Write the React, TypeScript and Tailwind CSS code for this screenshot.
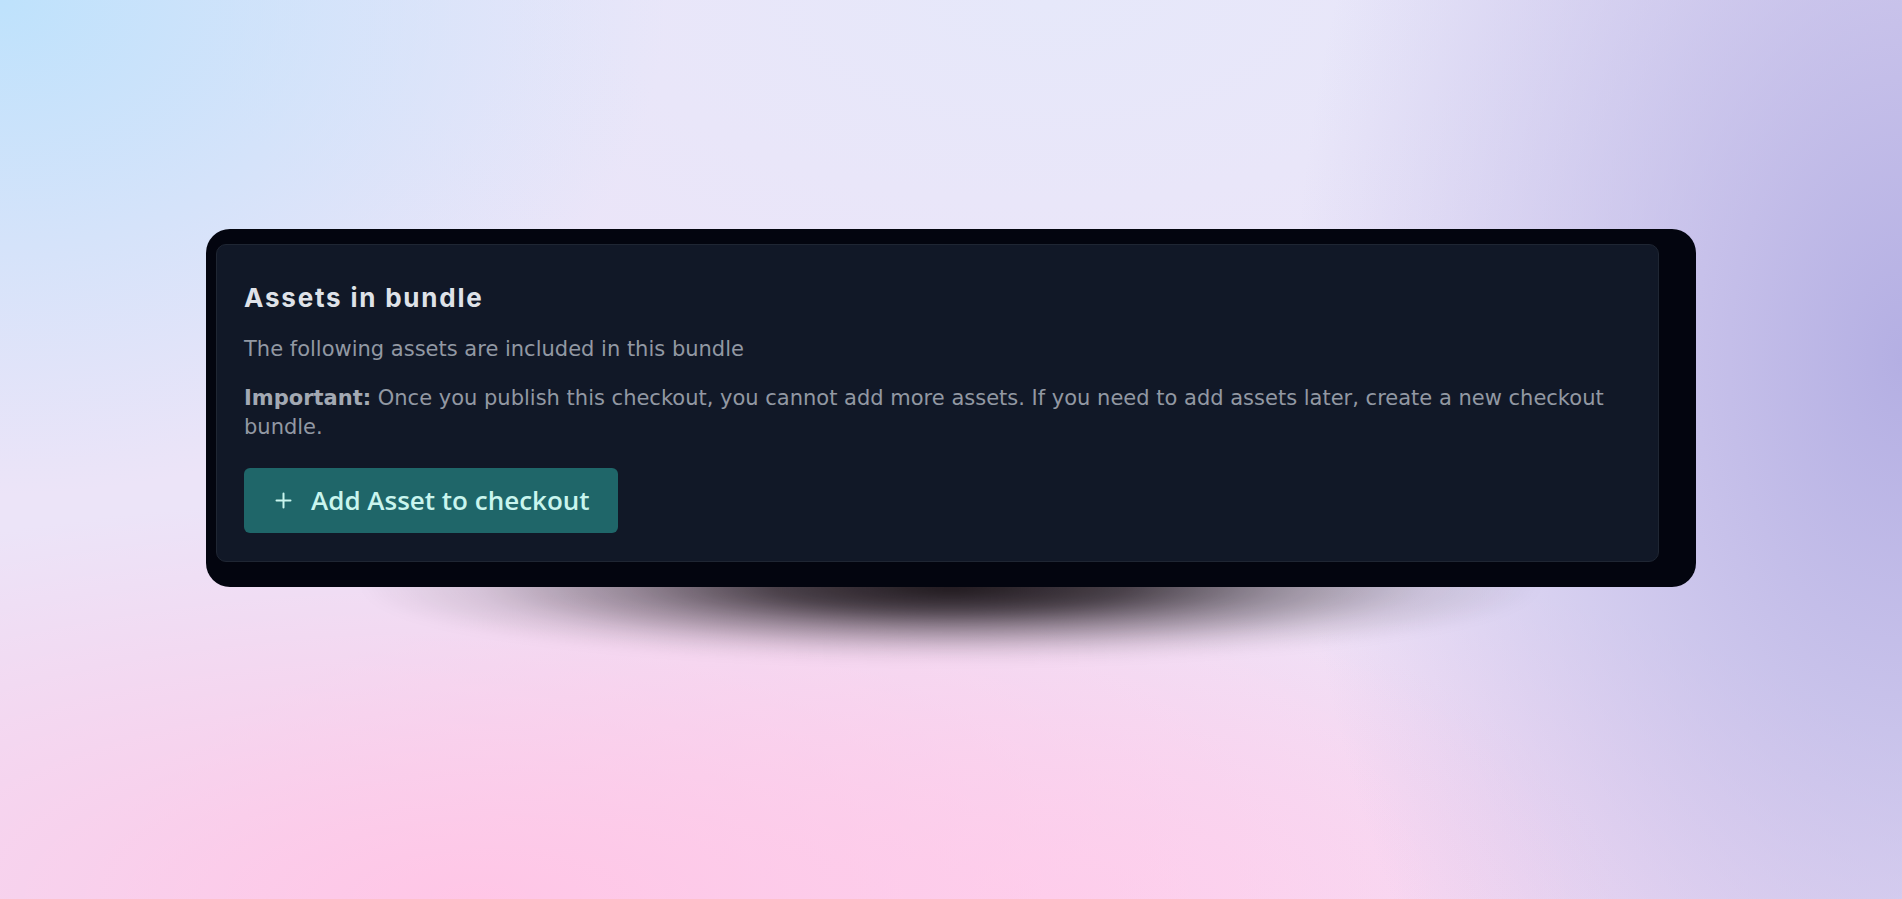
import React from "react";

export default function App() {
  return (
    <div className="relative min-h-screen w-full overflow-hidden bg-[#ece4f8] bg-[radial-gradient(ellipse_35%_55%_at_0%_0%,rgba(190,226,252,1)_0%,rgba(190,226,252,0)_100%),radial-gradient(ellipse_32%_110%_at_100%_40%,rgba(180,175,227,1)_0%,rgba(180,175,227,0.6)_40%,rgba(180,175,227,0)_100%),radial-gradient(ellipse_60%_45%_at_25%_100%,rgba(255,198,230,1)_0%,rgba(255,198,230,0)_100%),radial-gradient(ellipse_50%_40%_at_55%_100%,rgba(253,212,240,1)_0%,rgba(253,212,240,0)_100%),radial-gradient(ellipse_45%_45%_at_55%_0%,rgba(230,232,250,1)_0%,rgba(230,232,250,0)_100%)]">
      <div className="flex min-h-screen w-full items-center justify-center pb-[83px]">
        <div className="relative w-[1490px]">
          <div className="pointer-events-none absolute -bottom-[75px] left-1/2 h-[150px] w-[1180px] -translate-x-1/2 bg-[radial-gradient(ellipse_50%_50%_at_50%_50%,rgba(16,10,14,0.95)_0%,rgba(16,10,14,0.75)_30%,rgba(16,10,14,0.4)_55%,rgba(16,10,14,0.12)_80%,rgba(16,10,14,0)_100%)] blur-[6px]" />
          <div className="relative rounded-[24px] bg-[#03050f] pb-[25px] pl-[10px] pr-[37px] pt-[15px]">
            <div className="rounded-[10px] border border-[#1f2633] bg-[#111827] px-[27px] pb-[28px] pt-[33px]">
              <h2 className="font-['Inter',sans-serif] text-[26px] font-bold leading-[40px] tracking-[1.8px] text-[#dfe2e8]">
                Assets in bundle
              </h2>
              <p className="mt-[17px] font-['DejaVu_Sans',sans-serif] text-[21px] leading-[29px] text-[#9298a3]">
                The following assets are included in this bundle
              </p>
              <p className="mt-[20px] font-['DejaVu_Sans',sans-serif] text-[21px] leading-[29px] text-[#9298a3]">
                <span className="font-bold text-[#a3a9b3]">Important:</span> Once you publish this checkout, you cannot add more assets. If you need to add assets later, create a new checkout bundle.
              </p>
              <button className="mt-[26px] flex h-[65px] items-center rounded-[6px] bg-[#1f6669] pl-[31px] pr-[28px] font-['Open_Sans',sans-serif] text-[26px] font-semibold text-[#c9f5ee]">
                <svg width="17" height="17" viewBox="0 0 17 17" fill="none" stroke="currentColor" strokeWidth="2" strokeLinecap="round">
                  <path d="M8.5 1.5v14M1.5 8.5h14" />
                </svg>
                <span className="ml-[19px]">Add Asset to checkout</span>
              </button>
            </div>
          </div>
        </div>
      </div>
    </div>
  );
}
